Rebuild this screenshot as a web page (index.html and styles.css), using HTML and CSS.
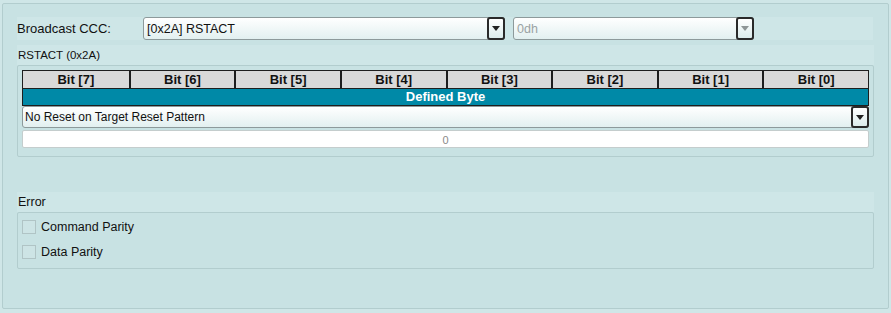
FILE: index.html
```html
<!DOCTYPE html>
<html lang="en">
<head>
  <meta charset="UTF-8" />
  <title>Broadcast CCC</title>
  <link rel="stylesheet" href="styles.css">
</head>
<body>
  <div class="panel">
    <div class="ccc-row">
      <span class="ccc-label">Broadcast CCC:</span>
      <div class="combo combo-main">
        <span class="combo-text">[0x2A] RSTACT</span>
        <span class="combo-btn"><i class="arrow"></i></span>
      </div>
      <div class="combo combo-sub disabled">
        <span class="combo-text">0dh</span>
        <span class="combo-btn"><i class="arrow"></i></span>
      </div>
    </div>

    <div class="section-title">RSTACT (0x2A)</div>
    <div class="group">
      <div class="bit-table">
        <div class="bit-head">
          <span>Bit [7]</span>
          <span>Bit [6]</span>
          <span>Bit [5]</span>
          <span>Bit [4]</span>
          <span>Bit [3]</span>
          <span>Bit [2]</span>
          <span>Bit [1]</span>
          <span>Bit [0]</span>
        </div>
        <div class="bit-bar">Defined Byte</div>
      </div>
      <div class="combo combo-wide">
        <span class="combo-text">No Reset on Target Reset Pattern</span>
        <span class="combo-btn"><i class="arrow"></i></span>
      </div>
      <div class="value-box">0</div>
    </div>

    <div class="section-title error-title">Error</div>
    <div class="group error-group">
      <label class="check"><span class="box"></span>Command Parity</label>
      <label class="check"><span class="box"></span>Data Parity</label>
    </div>
  </div>
</body>
</html>
```

FILE: styles.css
```css
:root {
  --page-bg: #cfe6e7;
  --panel-bg: #c8e2e3;
  --band-bg: #cee6e7;
  --line: #b2cdce;
  --dark: #1e1e1e;
  --teal: #0089a7;
  --text: #111;
}
body {
  margin: 0;
  background: var(--page-bg);
  font-family: 'Liberation Sans', Arial, sans-serif;
  font-size: 12px;
  color: var(--text);
}
.panel {
  margin: 3px 2px 2px 2px;
  height: 306px;
  box-sizing: border-box;
  border: 1px solid var(--line);
  border-radius: 2px;
  background: var(--panel-bg);
  padding: 13px 14px 0 14px;
}
.ccc-row {
  display: flex;
  align-items: center;
  height: 23px;
  background: var(--band-bg);
  width: 856px;
}
.ccc-label {
  width: 126px;
  font-size: 13px;
}
.combo {
  display: flex;
  align-items: center;
  box-sizing: border-box;
  height: 23px;
  border: 1px solid #8d9a9b;
  border-radius: 3px;
  background: linear-gradient(to bottom, #ffffff, #e2f0f0);
  padding-left: 3px;
}
.combo-main { width: 362px; }
.combo-sub { width: 241px; margin-left: 8px; }
.combo-text {
  flex: 1;
  font-size: 12.5px;
  white-space: nowrap;
}
.combo-btn {
  box-sizing: border-box;
  width: 18px;
  height: 23px;
  margin-right: -1px;
  border: 2px solid #2a2a2a;
  border-radius: 3px;
  background: linear-gradient(to bottom, #ffffff, #dcecec);
  display: flex;
  align-items: center;
  justify-content: center;
}
.arrow {
  width: 0;
  height: 0;
  border-left: 4px solid transparent;
  border-right: 4px solid transparent;
  border-top: 5px solid #222;
}
.disabled .combo-text { color: #9aa3a4; }
.disabled .arrow { border-top-color: #8e9596; }

.section-title {
  margin-top: 5px;
  height: 20px;
  line-height: 20px;
  padding-left: 1px;
  font-size: 11.5px;
  background: var(--band-bg);
  width: 856px;
}
.group {
  box-sizing: border-box;
  width: 857px;
  border: 1px solid var(--line);
  border-radius: 2px;
  padding: 4px 4px 8px 4px;
}
.bit-table {
  border: 1px solid var(--dark);
}
.bit-head {
  display: grid;
  grid-template-columns: repeat(8, 1fr);
  background: #d9d9d9;
}
.bit-head span {
  height: 17px;
  line-height: 17px;
  text-align: center;
  font-weight: bold;
  font-size: 13px;
  border-left: 2px solid var(--dark);
}
.bit-head span:first-child { border-left: none; }
.bit-bar {
  height: 16px;
  line-height: 16px;
  border-top: 1px solid var(--dark);
  background: var(--teal);
  color: #fff;
  font-weight: bold;
  font-size: 13px;
  text-align: center;
}
.combo-wide {
  width: 100%;
  height: 22px;
  margin-top: 0;
  padding-left: 2px;
}
.combo-wide .combo-text { font-size: 12px; }
.combo-wide .combo-btn { height: 22px; }
.value-box {
  margin-top: 2px;
  height: 18px;
  line-height: 18px;
  box-sizing: border-box;
  border: 1px solid #c4cdcd;
  border-radius: 2px;
  background: #fff;
  text-align: center;
  color: #8a8a8a;
  font-size: 11px;
}
.error-title {
  margin-top: 35px;
  font-size: 12.5px;
}
.error-group {
  height: 57px;
  padding: 7px 4px 0 4px;
  display: flex;
  flex-direction: column;
  gap: 11px;
}
.check {
  display: flex;
  align-items: center;
  gap: 5px;
  font-size: 12.5px;
  height: 14px;
}
.box {
  width: 12px;
  height: 12px;
  border: 1px solid #b0c4c5;
  background: #cde4e5;
}
```
